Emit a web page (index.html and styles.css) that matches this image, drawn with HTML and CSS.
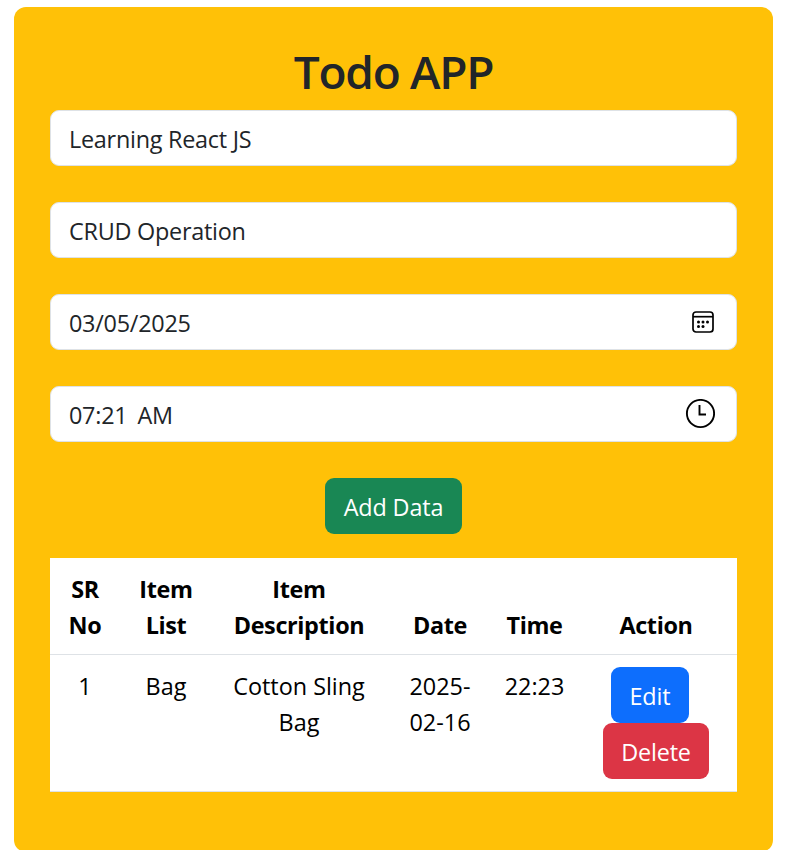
FILE: index.html
```html
<!DOCTYPE html>
<html lang="en">
<head>
<meta charset="utf-8">
<title>Todo APP</title>
<link rel="stylesheet" href="styles.css">
</head>
<body>
<main class="card">
  <h1 class="title">Todo APP</h1>
  <form class="form">
    <div class="field"><span>Learning React JS</span></div>
    <div class="field"><span>CRUD Operation</span></div>
    <div class="field"><span>03/05/2025</span>
      <svg class="calendar" width="24" height="24" viewBox="0 0 24 24" fill="none" stroke="#000" stroke-width="1.7">
        <rect x="2" y="2" width="20" height="20" rx="3"/><path d="M2 6.7h20"/>
        <g fill="#000" stroke="none"><circle cx="7.5" cy="12.1" r="1.5"/><circle cx="12" cy="12.1" r="1.5"/><circle cx="16.5" cy="12.1" r="1.5"/><circle cx="7.5" cy="16.4" r="1.5"/><circle cx="12" cy="16.4" r="1.5"/></g>
      </svg>
    </div>
    <div class="field"><span class="time"><span>07:21</span><span>AM</span></span>
      <svg class="clock" width="30" height="30" viewBox="0 0 30 30" fill="none" stroke="#000" stroke-width="1.9">
        <circle cx="15.5" cy="14.5" r="13.6"/><path d="M14.5 6v9.5H21"/>
      </svg>
    </div>
    <button type="button" class="btn add">Add Data</button>
  </form>
  <table class="table">
    <colgroup><col class="c1"><col class="c2"><col class="c3"><col class="c4"><col class="c5"><col class="c6"></colgroup>
    <thead><tr><th>SR<br>No</th><th>Item<br>List</th><th>Item<br>Description</th><th>Date</th><th>Time</th><th>Action</th></tr></thead>
    <tbody><tr><td>1</td><td>Bag</td><td>Cotton Sling<br>Bag</td><td>2025-<br>02-16</td><td>22:23</td>
      <td class="actions"><button type="button" class="btn edit">Edit</button><button type="button" class="btn delete">Delete</button></td></tr></tbody>
  </table>
</main>
</body>
</html>
```

FILE: styles.css
```css
* { box-sizing: border-box; }
html { overflow: hidden; }
body {
  margin: 0;
  padding: 7px 13px 0 14px;
  background: #fff;
  color: #212529;
  font: 23.4px/36px "Open Sans", "Noto Sans", sans-serif;
}
.card {
  height: 845px;
  padding: 36px;
  border-radius: 12px;
  background: #ffc107;
}
.title {
  height: 67px;
  margin: 0;
  font-size: 46px;
  line-height: 56px;
  font-weight: 560;
  letter-spacing: -1.3px;
  text-align: center;
}
.form {
  display: flex;
  flex-direction: column;
  gap: 36px;
  margin-bottom: 24px;
}
.field {
  display: flex;
  align-items: center;
  justify-content: space-between;
  height: 56px;
  padding: 2px 20px 0 18px;
  border: 1px solid #dee2e6;
  border-radius: 9px;
  background: #fff;
  letter-spacing: -0.25px;
}
.time { display: flex; gap: 10px; }
.calendar { margin: 0 1px 2px 0; }
.clock { margin: 0 1px 3px 0; }
.btn {
  height: 56px;
  padding: 1px 0 0;
  border: 0;
  border-radius: 9px;
  color: #fff;
  font: inherit;
  letter-spacing: -0.15px;
}
.add { align-self: center; width: 137px; background: #198754; }
.table {
  width: 687px;
  table-layout: fixed;
  border-collapse: separate;
  border-spacing: 0;
  background: #fff;
  color: #000;
  text-align: center;
}
.table th, .table td {
  padding: 13px 0 11px;
  border-bottom: 1px solid #dee2e6;
}
.table th { font-weight: 700; letter-spacing: -0.35px; vertical-align: bottom; }
.table td { height: 137px; vertical-align: top; }
.table .actions { padding: 12px 0; }
.c1 { width: 70px; }
.c2 { width: 92px; }
.c3 { width: 174px; }
.c4 { width: 108px; }
.c5 { width: 81px; }
.c6 { width: 162px; }
.edit, .delete { display: block; margin: 0 auto; }
.edit { width: 78px; margin-left: 36px; background: #0d6efd; }
.delete { width: 106px; background: #dc3545; }
```
